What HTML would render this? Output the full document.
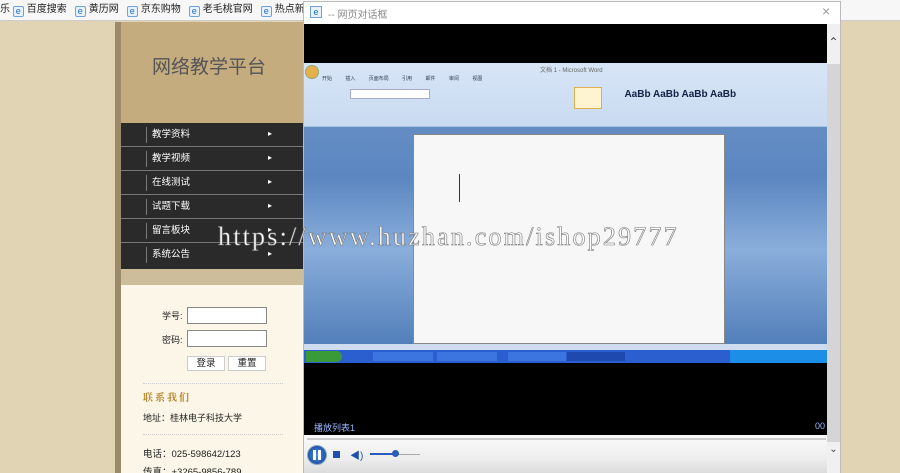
<!DOCTYPE html>
<html><head><meta charset="utf-8"><style>
*{margin:0;padding:0;box-sizing:border-box}
html,body{width:900px;height:473px;overflow:hidden}
body{position:relative;background:#e0d4b5;font-family:"Liberation Sans","Noto Sans CJK SC",sans-serif;font-size:9px;color:#222}
.a{position:absolute}
.bm{top:0;left:0;width:900px;height:21px;background:#f7f7f7;border-bottom:1px solid #ccc;font-size:10px;white-space:nowrap;line-height:20px}
.bm span{margin-right:8px}
.bm i{display:inline-block;width:11px;height:11px;border:1px solid #6fa3d8;border-radius:2px;background:#e8f2fc;color:#1b6fc8;font-size:9px;line-height:9px;text-align:center;font-style:normal;vertical-align:-2px;margin-right:3px}
.menu div{height:24px;border-bottom:1px solid #777;color:#fff;font-size:9.5px;line-height:24px;padding-left:31px;position:relative}
.menu div:before{content:"";position:absolute;left:25px;top:4px;height:16px;border-left:1px solid #777}
.menu div:after{content:"▸";position:absolute;left:147px;top:-1px;font-size:8px}
input{position:absolute;width:80px;height:17px;border:1px solid #888;background:#fff}
.btn{position:absolute;width:38px;height:15px;border:1px solid #ccc;background:#fff;text-align:center;font-size:9.5px;line-height:14px}
</style></head><body>
<div class="a bm">乐 <i>e</i><span>百度搜索</span><i>e</i><span>黄历网</span><i>e</i><span>京东购物</span><i>e</i><span>老毛桃官网</span><i>e</i><span>热点新闻</span></div>
<div class="a" style="left:115px;top:22px;width:188px;height:451px;background:#c4ac7f"></div>
<div class="a" style="left:115px;top:22px;width:6px;height:451px;background:#9c8b68"></div>
<div class="a" style="left:152px;top:52px;font-size:19px;color:#555">网络教学平台</div>
<div class="a menu" style="left:121px;top:123px;width:182px;height:146px;background:#2a2a2a">
<div>教学资料</div><div>教学视频</div><div>在线测试</div><div>试题下载</div><div>留言板块</div><div style="border:0">系统公告</div></div>
<div class="a" style="left:121px;top:269px;width:182px;height:16px;background:#cdbd9b"></div>
<div class="a" style="left:121px;top:285px;width:182px;height:188px;background:#fbf6e8"></div>
<div class="a" style="left:162px;top:309px;font-size:9px">学号:</div>
<input style="left:187px;top:307px">
<div class="a" style="left:162px;top:333px;font-size:9px">密码:</div>
<input style="left:187px;top:330px">
<div class="btn" style="left:187px;top:356px">登录</div>
<div class="btn" style="left:228px;top:356px">重置</div>
<div class="a" style="left:143px;top:383px;width:140px;border-top:1px dotted #ccc"></div>
<div class="a" style="left:143px;top:389px;font-size:10px;color:#b8862b;font-weight:bold;font-family:'Noto Serif CJK SC',serif;letter-spacing:2px">联系我们</div>
<div class="a" style="left:143px;top:411px">地址：桂林电子科技大学</div>
<div class="a" style="left:143px;top:434px;width:140px;border-top:1px dotted #ccc"></div>
<div class="a" style="left:143px;top:446px;font-size:9.5px">电话：025-598642/123</div>
<div class="a" style="left:143px;top:464px;font-size:9.5px">传真：+3265-9856-789</div>

<!-- dialog -->
<div class="a" style="left:303px;top:1px;width:538px;height:472px;background:#fff;border:1px solid #bbb"></div>
<div class="a" style="left:310px;top:6px;width:12px;height:12px;border:1px solid #6fa3d8;background:#e8f2fc;color:#1b6fc8;font-size:9px;text-align:center;line-height:10px">e</div>
<div class="a" style="left:328px;top:6px;font-size:10px;color:#888">-- 网页对话框</div>
<div class="a" style="left:822px;top:3px;font-size:14px;color:#999">×</div>
<div class="a" style="left:304px;top:24px;width:523px;height:411px;background:#000"></div>
<div class="a" style="left:827px;top:24px;width:13px;height:449px;background:#d5d5d5"></div>
<div class="a" style="left:827px;top:24px;width:13px;height:40px;background:#f0f0f0;font-size:12px;text-align:center;color:#444;line-height:36px">⌃</div>
<div class="a" style="left:827px;top:442px;width:13px;height:31px;background:#f0f0f0;font-size:10px;text-align:center;color:#444;line-height:16px">⌄</div>
<!-- word -->
<div class="a" style="left:304px;top:63px;width:523px;height:287px;background:linear-gradient(#6f96c8,#5b86c0 40%,#8aaedb 65%,#4f7cb8)"></div>
<div class="a" style="left:304px;top:63px;width:523px;height:64px;background:linear-gradient(#d7e5f6,#c9dbf1);border-bottom:1px solid #a9c3e3"></div>
<div class="a" style="left:305px;top:65px;width:14px;height:14px;border-radius:50%;background:#e8b04a;border:1px solid #8a7"></div>
<div class="a" style="left:540px;top:65px;font-size:6px;color:#666">文档 1 - Microsoft Word</div>
<div class="a" style="left:322px;top:75px;font-size:5px;color:#345;word-spacing:12px">开始 插入 页面布局 引用 邮件 审阅 视图</div>
<div class="a" style="left:350px;top:89px;width:80px;height:10px;background:#fff;border:1px solid #aac"></div>
<div class="a" style="left:574px;top:87px;width:28px;height:22px;background:#fff4d0;border:1px solid #e0b050"></div>
<div class="a" style="left:605px;top:87px;width:130px;height:22px;font-size:10px;font-weight:bold;color:#124;line-height:16px;white-space:nowrap">&nbsp;&nbsp;&nbsp;&nbsp;&nbsp;&nbsp;&nbsp;AaBb AaBb AaBb AaBb</div>
<div class="a" style="left:413px;top:134px;width:312px;height:210px;background:#f7f7f7;border:1px solid #888"></div>
<div class="a" style="left:459px;top:174px;width:1px;height:28px;background:#333"></div>
<div class="a" style="left:304px;top:344px;width:523px;height:6px;background:#cfdcef"></div>
<div class="a" style="left:304px;top:350px;width:523px;height:13px;background:#2b5fd0"></div>
<div class="a" style="left:306px;top:351px;width:36px;height:11px;background:#3a9a3a;border-radius:0 6px 6px 0"></div>
<div class="a" style="left:373px;top:352px;width:60px;height:9px;background:#3c74e0"></div>
<div class="a" style="left:437px;top:352px;width:60px;height:9px;background:#3c74e0"></div>
<div class="a" style="left:508px;top:352px;width:58px;height:9px;background:#3c74e0"></div>
<div class="a" style="left:567px;top:352px;width:58px;height:9px;background:#1e4ab0"></div>
<div class="a" style="left:730px;top:350px;width:97px;height:13px;background:#1c8ee8"></div>
<div class="a" style="left:314px;top:421px;font-size:9px;color:#9ab8ff">播放列表1</div>
<div class="a" style="left:815px;top:421px;font-size:9px;color:#9ab8ff">00</div>
<div class="a" style="left:304px;top:435px;width:523px;height:38px;background:linear-gradient(#fafafa,#eee 60%,#dcdcdc)"></div>
<div class="a" style="left:307px;top:438px;width:519px;height:2px;background:#ccc"></div>
<div class="a" style="left:307px;top:445px;width:20px;height:20px;border-radius:50%;background:radial-gradient(#4a8ae0,#123f9a);border:1px solid #8ab"></div>
<div class="a" style="left:313px;top:450px;width:3px;height:10px;background:#fff"></div>
<div class="a" style="left:318px;top:450px;width:3px;height:10px;background:#fff"></div>
<div class="a" style="left:333px;top:451px;width:7px;height:7px;background:#1d4fb0"></div>
<div class="a" style="left:350px;top:447px;font-size:10px;color:#1d4fb0">◀)</div>
<div class="a" style="left:370px;top:454px;width:50px;height:1px;background:#aaa"></div>
<div class="a" style="left:370px;top:453px;width:25px;height:2px;background:#2a5bc0"></div>
<div class="a" style="left:392px;top:450px;width:7px;height:7px;border-radius:50%;background:#2a5bc0"></div>
<!-- watermark -->
<div class="a" style="left:218px;top:222px;font-family:'Liberation Serif',serif;font-size:26px;color:#fff;-webkit-text-stroke:0.6px #777;white-space:nowrap;letter-spacing:2.2px">https://www.huzhan.com/ishop29777</div>
</body></html>
